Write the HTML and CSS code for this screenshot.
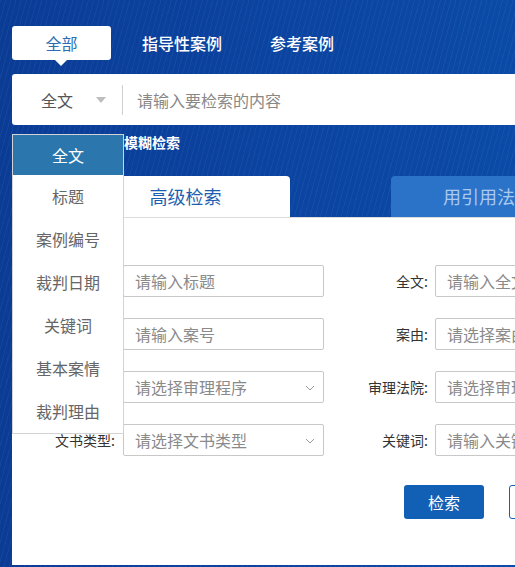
FILE: index.html
```html
<!DOCTYPE html>
<html lang="zh-CN">
<head>
<meta charset="utf-8">
<title>案例检索</title>
<link rel="stylesheet" href="styles.css">
</head>
<body>
<div class="page">
  <div class="wrap">
    <div class="top-tabs">
      <div class="ttab active">全部</div>
      <div class="ttab t2">指导性案例</div>
      <div class="ttab t3">参考案例</div>
    </div>
    <div class="search">
      <div class="scope">全文</div>
      <span class="caret"></span>
      <span class="divider"></span>
      <div class="ph">请输入要检索的内容</div>
    </div>
    <div class="fuzzy"><span class="cb"></span>模糊检索</div>
    <div class="ptabs">
      <div class="ptab active">高级检索</div>
      <div class="ptab other">用引用法条检索</div>
    </div>
    <div class="panel">
      <div class="row">
        <div class="lbl">标题:</div>
        <div class="field">请输入标题</div>
        <div class="lbl lbl2">全文:</div>
        <div class="field">请输入全文</div>
      </div>
      <div class="row">
        <div class="lbl">案号:</div>
        <div class="field">请输入案号</div>
        <div class="lbl lbl2">案由:</div>
        <div class="field">请选择案由</div>
      </div>
      <div class="row">
        <div class="lbl">审理程序:</div>
        <div class="field select">请选择审理程序<svg class="chev" width="10" height="6" viewBox="0 0 10 6"><path d="M1 1 L5 5 L9 1" fill="none" stroke="#999" stroke-width="1"/></svg></div>
        <div class="lbl lbl2">审理法院:</div>
        <div class="field">请选择审理法院</div>
      </div>
      <div class="row">
        <div class="lbl">文书类型:</div>
        <div class="field select">请选择文书类型<svg class="chev" width="10" height="6" viewBox="0 0 10 6"><path d="M1 1 L5 5 L9 1" fill="none" stroke="#999" stroke-width="1"/></svg></div>
        <div class="lbl lbl2">关键词:</div>
        <div class="field">请输入关键词</div>
      </div>
      <div class="btns">
        <div class="btn primary">检索</div>
        <div class="btn ghost">重置</div>
      </div>
    </div>
  </div>
  <ul class="menu">
    <li class="on">全文</li>
    <li>标题</li>
    <li>案例编号</li>
    <li>裁判日期</li>
    <li>关键词</li>
    <li>基本案情</li>
    <li>裁判理由</li>
  </ul>
</div>
</body>
</html>
```

FILE: styles.css
```css
* { box-sizing: border-box; }
html, body {
  margin: 0;
  padding: 0;
}
body {
  font-family: "Noto Sans CJK SC", "Noto Sans", sans-serif;
  background: #0b44a0;
}
.page {
  position: relative;
  width: 515px;
  height: 567px;
  overflow: hidden;
  background:
    repeating-linear-gradient(105deg, rgba(255,255,255,0.045) 0 1px, rgba(255,255,255,0) 1px 5px),
    linear-gradient(90deg, #0a3c96 0%, #0b43a0 50%, #0b4aa7 100%);
}
.wrap {
  width: 760px;
  padding-left: 12px;
  padding-top: 26px;
}

/* top tabs */
.top-tabs {
  display: flex;
  height: 34px;
  align-items: center;
}
.ttab {
  font-size: 16px;
  line-height: 34px;
  color: #fff;
  font-weight: 500;
}
.ttab.active {
  position: relative;
  width: 99px;
  text-align: center;
  background: #fff;
  color: #2a6db3;
  border-radius: 3px;
  font-weight: 400;
}
.ttab.active::after {
  content: "";
  position: absolute;
  left: 43px;
  bottom: -6px;
  border-top: 6px solid #fff;
  border-left: 6px solid transparent;
  border-right: 6px solid transparent;
}
.t2 { margin-left: 31px; }
.t3 { margin-left: 48px; }

/* search bar */
.search {
  margin-top: 14px;
  height: 51px;
  background: #fff;
  border-radius: 3px;
  display: flex;
  align-items: center;
  padding-left: 29px;
}
.scope {
  font-size: 16px;
  color: #555;
  line-height: 20px;
}
.caret {
  margin-left: 23px;
  width: 0;
  height: 0;
  border-top: 6px solid #bdbdbd;
  border-left: 5.5px solid transparent;
  border-right: 5.5px solid transparent;
}
.divider {
  margin-left: 16px;
  width: 1px;
  height: 30px;
  background: #cfcfcf;
}
.ph {
  margin-left: 14px;
  font-size: 16px;
  color: #888;
  line-height: 20px;
}

/* fuzzy */
.fuzzy {
  margin-top: 8px;
  height: 18px;
  line-height: 18px;
  font-size: 14px;
  font-weight: 700;
  color: #fff;
  display: flex;
  align-items: center;
}
.cb {
  width: 13px;
  height: 13px;
  margin-left: 94px;
  margin-right: 5px;
  background: #fff;
  border-radius: 2px;
}

/* panel tabs */
.ptabs {
  margin-top: 25px;
  display: flex;
  height: 41px;
}
.ptab {
  width: 209px;
  height: 41px;
  line-height: 41px;
  font-size: 18px;
  border-radius: 4px 4px 0 0;
  text-align: center;
}
.ptab.active {
  margin-left: 69px;
  background: #fff;
  color: #1d5fae;
}
.ptab.other {
  margin-left: 101px;
  width: 260px;
  text-align: left;
  padding-left: 52px;
  background: #2b73c9;
  color: #a9c9ef;
  white-space: nowrap;
  overflow: hidden;
}

/* panel */
.panel {
  background: #fff;
  border-top: 1px solid #dcdcdc;
  padding: 47px 0 46px;
}
.row {
  display: flex;
  align-items: center;
  height: 32px;
  margin-bottom: 21px;
}
.row:last-of-type { margin-bottom: 0; }
.lbl {
  width: 111px;
  padding-right: 8px;
  text-align: right;
  font-size: 14px;
  color: #333;
  white-space: nowrap;
}
.lbl2 {
  padding-right: 7px;
}
.field {
  position: relative;
  width: 201px;
  height: 32px;
  border: 1px solid #c8c8c8;
  border-radius: 2px;
  padding-left: 11px;
  font-size: 16px;
  line-height: 30px;
  color: #8a8a8a;
  white-space: nowrap;
  overflow: hidden;
}
.chev {
  position: absolute;
  right: 8px;
  top: 13px;
}

/* buttons */
.btns {
  display: flex;
  margin-top: 29px;
  margin-left: 392px;
}
.btn {
  width: 80px;
  height: 34px;
  line-height: 34px;
  border-radius: 3px;
  text-align: center;
  font-size: 16px;
}
.btn.primary {
  background: #1160b6;
  color: #fff;
}
.btn.ghost {
  margin-left: 25px;
  border: 1px solid #1160b6;
  line-height: 32px;
  color: #1160b6;
  background: #fff;
}

/* dropdown menu */
.menu {
  position: absolute;
  left: 12px;
  top: 134px;
  width: 112px;
  margin: 0;
  padding: 0;
  list-style: none;
  background: #fff;
  border: 1px solid #d3d3d3;
}
.menu li {
  height: 43px;
  line-height: 43px;
  text-align: center;
  font-size: 16px;
  color: #666;
}
.menu li.on {
  height: 40px;
  line-height: 40px;
  background: #2b77ad;
  color: #fff;
}
```
